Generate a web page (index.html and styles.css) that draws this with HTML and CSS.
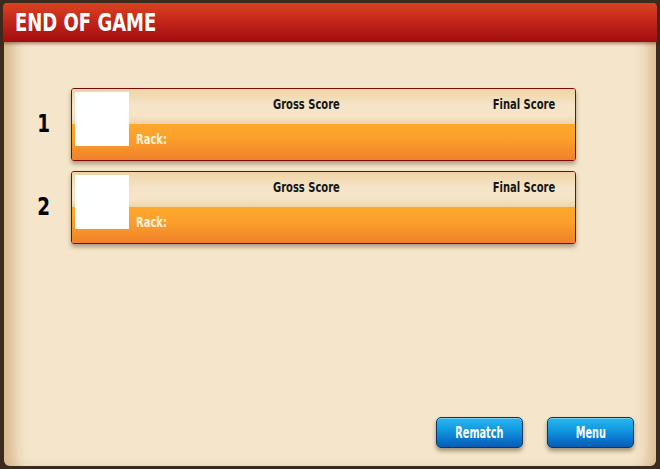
FILE: index.html
```html
<!DOCTYPE html>
<html>
<head>
<meta charset="utf-8">
<link rel="stylesheet" href="styles.css">
</head>
<body>
<div class="dialog">
  <div class="header"><h1 class="title">END OF GAME</h1></div>
  <div class="content">
    <div class="rows">
      <div class="row">
        <div class="rank"><span class="rank-num">1</span></div>
        <div class="card">
          <div class="avatar"></div>
          <div class="card-top">
            <span class="label gross">Gross Score</span>
            <span class="label final">Final Score</span>
          </div>
          <div class="card-bottom"><span class="label rack">Rack:</span></div>
        </div>
      </div>
      <div class="row">
        <div class="rank"><span class="rank-num">2</span></div>
        <div class="card">
          <div class="avatar"></div>
          <div class="card-top">
            <span class="label gross">Gross Score</span>
            <span class="label final">Final Score</span>
          </div>
          <div class="card-bottom"><span class="label rack">Rack:</span></div>
        </div>
      </div>
    </div>
    <div class="footer">
      <button class="btn"><span class="btn-text">Rematch</span></button>
      <button class="btn"><span class="btn-text">Menu</span></button>
    </div>
  </div>
</div>
</body>
</html>
```

FILE: styles.css
```css
html, body {
  margin: 0;
  padding: 0;
}
body {
  width: 660px;
  height: 469px;
  overflow: hidden;
  background: #3b2a1e;
  font-family: "DejaVu Sans Condensed", "DejaVu Sans", sans-serif;
  font-weight: bold;
}
.dialog {
  margin: 3px 4px 0 4px;
  height: 463px;
  display: flex;
  flex-direction: column;
  background: #f5e5cb;
  border-radius: 4px 4px 6px 6px;
  box-shadow: inset 18px 0 14px -8px rgba(190,140,80,0.5), inset -16px 0 14px -8px rgba(190,140,80,0.45);
  position: relative;
}
.header {
  height: 39px;
  margin: 0 -1px;
  border-radius: 4px 4px 0 0;
  background: linear-gradient(#d9431f 0%, #c4271a 45%, #a10c10 100%);
  box-shadow: 0 2px 3px rgba(90,40,10,0.45);
  display: flex;
  align-items: center;
  position: relative;
  z-index: 1;
}
.title {
  margin: 0 0 0 12px;
  color: #fff;
  font-size: 25px;
  font-weight: bold;
  display: inline-block;
  transform: scaleX(0.8);
  transform-origin: left center;
  white-space: nowrap;
}
.content {
  flex: 1;
  display: flex;
  flex-direction: column;
  padding-top: 46px;
}
.rows {
  display: flex;
  flex-direction: column;
  gap: 10px;
}
.row {
  display: flex;
  align-items: center;
}
.rank {
  width: 54px;
  padding-left: 13px;
  text-align: center;
  color: #000;
}
.rank-num {
  display: inline-block;
  font-size: 24px;
  transform: scaleX(0.85);
  margin-top: -2px;
}
.card {
  width: 503px;
  height: 71px;
  border: 1px solid #7a0d0a;
  border-radius: 3px;
  box-shadow: 0 3px 4px rgba(70,40,10,0.4);
  display: flex;
  flex-direction: column;
  position: relative;
  overflow: hidden;
}
.avatar {
  position: absolute;
  left: 3px;
  top: 3px;
  width: 54px;
  height: 54px;
  background: #fff;
  z-index: 2;
}
.label {
  display: inline-block;
  font-size: 13.5px;
  white-space: nowrap;
  transform: scaleX(0.82);
}
.card-top {
  height: 35px;
  background: linear-gradient(#efd3a4 0%, #f5e4c8 45%, #f5e4c8 75%, #eed5a8 100%);
  position: relative;
  color: #161616;
}
.gross {
  position: absolute;
  left: 201px;
  top: 7px;
  transform-origin: left center;
}
.final {
  position: absolute;
  right: 20px;
  top: 7px;
  transform-origin: right center;
}
.card-bottom {
  flex: 1;
  background: linear-gradient(#fea72d 0%, #fba02b 40%, #f0812a 100%);
  display: flex;
  align-items: center;
  padding-left: 64px;
  padding-bottom: 6px;
  box-sizing: border-box;
}
.rack {
  color: #fff4dc;
  transform-origin: left center;
}
.footer {
  margin-top: auto;
  display: flex;
  justify-content: flex-end;
  gap: 24px;
  padding: 0 22px 18px 0;
}
.btn {
  width: 87px;
  height: 31px;
  border: 1px solid #0b3562;
  border-radius: 5px;
  background: linear-gradient(#2ab6f0 0%, #129ae0 40%, #0a74cc 75%, #0a5cb0 100%);
  box-shadow: 0 3px 4px rgba(60,40,10,0.45), inset 0 1px 0 rgba(255,255,255,0.35);
  color: #fff;
  font-family: "DejaVu Sans Condensed", "DejaVu Sans", sans-serif;
  font-weight: bold;
  padding: 0;
  display: flex;
  align-items: center;
  justify-content: center;
}
.btn-text {
  display: inline-block;
  font-size: 15px;
  white-space: nowrap;
  transform: scaleX(0.72);
}
```
